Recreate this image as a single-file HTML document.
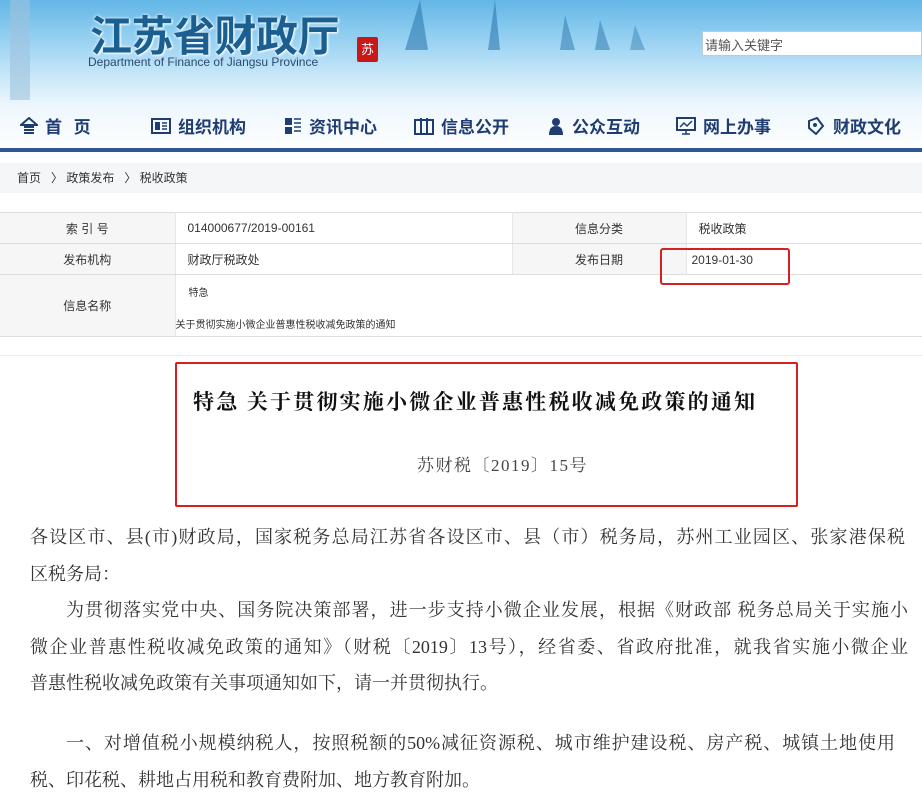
<!DOCTYPE html>
<html><head><meta charset="utf-8"><style>
*{margin:0;padding:0;box-sizing:border-box}
body{width:922px;height:796px;overflow:hidden;background:#fff;position:relative;font-family:"Liberation Sans","Noto Sans CJK SC",sans-serif}
.ban{position:absolute;left:0;top:0;width:922px;height:152px;background:linear-gradient(180deg,#62b6e6 0%,#8fcdf0 22%,#c8e7f8 50%,#eef7fd 70%,#fff 100%)}
.logo{position:absolute;left:90px;top:3px;font-size:42px;font-weight:bold;color:#1b5e90;letter-spacing:-0.5px;font-family:"Noto Sans CJK SC",sans-serif;text-shadow:0 0 3px #fff,1px 1px 2px #fff;white-space:nowrap}
.en{position:absolute;left:88px;top:55px;font-size:12px;color:#2a4a70}
.seal{position:absolute;left:357px;top:37px;width:21px;height:25px;background:#c81818;color:#fff;font-size:13px;text-align:center;line-height:25px;border-radius:2px}
.search{position:absolute;left:702px;top:31px;width:220px;height:25px;background:#fff;border:1px solid #bcd;font-size:13px;color:#555;padding:3px 2px}
.nav{position:absolute;top:113px;font-size:17px;font-weight:bold;color:#203d72;font-family:"Noto Sans CJK SC",sans-serif;display:flex;align-items:center;gap:7px}
.line{position:absolute;left:0;top:148px;width:922px;height:4px;background:#2c5896}
.bc{position:absolute;left:0;top:163px;width:922px;height:30px;background:#f4f6f8;font-size:12px;color:#333;line-height:30px;padding-left:17px}
table{position:absolute;left:0;top:212px;width:922px;border-collapse:collapse;font-size:12px;color:#333}
td{border-top:1px solid #ddd;border-bottom:1px solid #ddd;border-right:1px solid #e6e6e6;height:31px;vertical-align:middle}
td:last-child{border-right:none}
.l{background:#f6f6f6;text-align:center}
.box{position:absolute;left:175px;top:362px;width:623px;height:145px;border:2px solid #d32020;border-radius:2px}
.t{position:absolute;left:193px;top:386px;font-size:21px;letter-spacing:2.2px;font-weight:bold;color:#111;font-family:"Noto Serif CJK SC",serif;white-space:nowrap}
.s{position:absolute;left:417px;top:451px;font-size:17px;letter-spacing:1.5px;color:#444;font-family:"Liberation Serif","Noto Serif CJK SC",serif;white-space:nowrap}
.p{position:absolute;font-size:18px;color:#333;font-family:"Liberation Serif","Noto Serif CJK SC",serif;white-space:nowrap;text-align:justify;text-align-last:justify;line-height:24px}
</style></head><body>
<div class="ban">
 <svg width="922" height="152" style="position:absolute;left:0;top:0">
  <rect x="10" y="0" width="20" height="100" fill="#9fc2dc" opacity=".6"/>
  <polygon points="405,50 420,0 428,50" fill="#2f79b0" opacity=".6"/>
  <polygon points="488,50 495,0 500,50" fill="#2f79b0" opacity=".6"/>
  <polygon points="560,50 565,15 575,50" fill="#3a84b8" opacity=".6"/>
  <polygon points="595,50 600,20 610,50" fill="#3a84b8" opacity=".6"/>
  <polygon points="630,50 635,25 645,50" fill="#3a84b8" opacity=".5"/>
 </svg>
 <div class="logo">江苏省财政厅</div>
 <div class="en">Department of Finance of Jiangsu Province</div>
 <div class="seal">苏</div>
 <div class="search">请输入关键字</div>
</div>
<div class="nav" style="left:20px"><svg width="18" height="18"><path d="M9 1L1 8h16zM4 10h10M4 13h10M4 16h10" stroke="#203d72" stroke-width="2" fill="none"/></svg>首&nbsp;&nbsp;&nbsp;页</div>
<div class="nav" style="left:151px"><svg width="20" height="16"><rect x="1" y="1" width="18" height="14" fill="none" stroke="#203d72" stroke-width="2"/><rect x="4" y="4" width="5" height="8" fill="#203d72"/><path d="M11 5h5M11 8h5M11 11h5" stroke="#203d72" stroke-width="1.5"/></svg>组织机构</div>
<div class="nav" style="left:284px"><svg width="18" height="18"><rect x="1" y="1" width="7" height="7" fill="#203d72"/><rect x="1" y="10" width="7" height="7" fill="#203d72"/><path d="M10 2h7M10 6h7M10 10h7M10 14h7" stroke="#203d72" stroke-width="1.5"/></svg>资讯中心</div>
<div class="nav" style="left:414px"><svg width="20" height="18"><rect x="1" y="3" width="18" height="14" fill="none" stroke="#203d72" stroke-width="2"/><path d="M7 1v16M13 1v16" stroke="#203d72" stroke-width="2"/></svg>信息公开</div>
<div class="nav" style="left:547px"><svg width="18" height="18"><circle cx="9" cy="5" r="4" fill="#203d72"/><path d="M2 18q0-9 7-9t7 9z" fill="#203d72"/></svg>公众互动</div>
<div class="nav" style="left:676px"><svg width="20" height="18"><rect x="1" y="1" width="18" height="12" fill="none" stroke="#203d72" stroke-width="2"/><path d="M4 10l4-4 3 3 5-5M10 13v4M6 17h8" stroke="#203d72" stroke-width="1.5" fill="none"/></svg>网上办事</div>
<div class="nav" style="left:806px"><svg width="20" height="18"><path d="M3 4l8-3 6 8-7 8-7-6z" fill="none" stroke="#203d72" stroke-width="2"/><circle cx="9" cy="8" r="2" fill="#203d72"/></svg>财政文化</div>
<div class="line"></div>
<div class="bc">首页&nbsp;&nbsp;&nbsp;〉&nbsp;政策发布&nbsp;&nbsp;&nbsp;〉&nbsp;税收政策</div>
<table>
<tr><td class="l" style="width:175px">索 引 号</td><td style="width:337px;padding-left:12px">014000677/2019-00161</td><td class="l" style="width:174px">信息分类</td><td style="padding-left:12px">税收政策</td></tr>
<tr><td class="l">发布机构</td><td style="padding-left:12px">财政厅税政处</td><td class="l">发布日期</td><td style="padding-left:5px;vertical-align:top;padding-top:9px">2019-01-30</td></tr>
<tr><td class="l" style="height:62px">信息名称</td><td colspan="3" style="border-right:none;font-size:10px;vertical-align:top"><div style="padding:9px 0 0 13px">特急</div><div style="padding:17px 0 0 0">关于贯彻实施小微企业普惠性税收减免政策的通知</div></td></tr>
</table>
<div style="position:absolute;left:660px;top:248px;width:130px;height:37px;border:2px solid #d32020;border-radius:3px"></div>
<div style="position:absolute;left:0;top:355px;width:922px;height:1px;background:#eee"></div>
<div class="box"></div>
<div class="t">特急 关于贯彻实施小微企业普惠性税收减免政策的通知</div>
<div class="s">苏财税〔2019〕15号</div>
<div class="p" style="left:30px;top:525px;width:875px">各设区市、县(市)财政局，国家税务总局江苏省各设区市、县（市）税务局，苏州工业园区、张家港保税</div>
<div class="p" style="left:30px;top:562px">区税务局：</div>
<div class="p" style="left:66px;top:598px;width:842px">为贯彻落实党中央、国务院决策部署，进一步支持小微企业发展，根据《财政部 税务总局关于实施小</div>
<div class="p" style="left:30px;top:635px;width:878px">微企业普惠性税收减免政策的通知》（财税〔2019〕13号），经省委、省政府批准，就我省实施小微企业</div>
<div class="p" style="left:30px;top:671px">普惠性税收减免政策有关事项通知如下，请一并贯彻执行。</div>
<div class="p" style="left:66px;top:731px;width:829px">一、对增值税小规模纳税人，按照税额的50%减征资源税、城市维护建设税、房产税、城镇土地使用</div>
<div class="p" style="left:30px;top:768px">税、印花税、耕地占用税和教育费附加、地方教育附加。</div>
</body></html>
